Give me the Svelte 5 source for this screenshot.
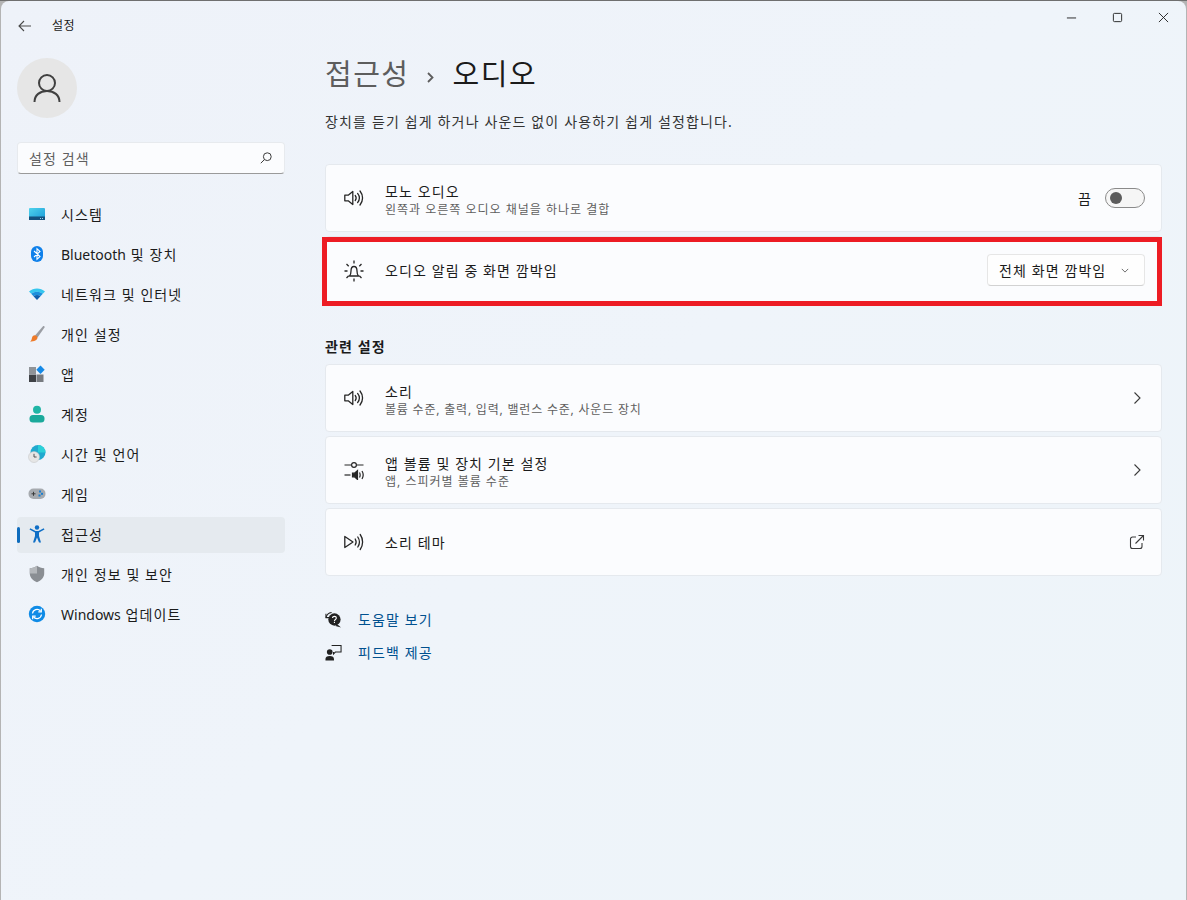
<script>
  const nav = [
    { id: 'system', label: '시스템' },
    { id: 'bluetooth', latin: 'Bluetooth', label: ' 및 장치' },
    { id: 'network', label: '네트워크 및 인터넷' },
    { id: 'personal', label: '개인 설정' },
    { id: 'apps', label: '앱' },
    { id: 'account', label: '계정' },
    { id: 'time', label: '시간 및 언어' },
    { id: 'game', label: '게임' },
    { id: 'access', label: '접근성', active: true },
    { id: 'privacy', label: '개인 정보 및 보안' },
    { id: 'update', latin: 'Windows', label: ' 업데이트' }
  ];
</script>

{#snippet speaker()}
  <svg class="row-icon" viewBox="0 0 20 20" fill="none" stroke="#262626" stroke-width="1.3">
    <path d="M0.800 7.200h3.400l4.600-3.800v13.200l-4.600-3.800H0.800z" stroke-linejoin="round" />
    <path d="M11.200 7.400c1.200 1.600 1.200 3.600 0 5.200" stroke-linecap="round" />
    <path d="M13.600 5.400c2.200 2.800 2.200 6.400 0 9.200" stroke-linecap="round" />
    <path d="M16 3c3.400 4.200 3.400 9.800 0 14" stroke-linecap="round" />
  </svg>
{/snippet}

<div class="window">
  <header class="titlebar">
    <div class="back-title">
      <svg class="back" viewBox="0 0 14 12" fill="none" stroke="#4a4a4a" stroke-width="1.100">
        <path d="M13 6H1M6 1L1 6l5 5" />
      </svg>
      <span class="app-name">설정</span>
    </div>
    <div class="controls">
      <span class="ctl"><svg viewBox="0 0 12 12" stroke="#1f1f1f" fill="none"><path d="M1 6.500h10" /></svg></span>
      <span class="ctl"><svg viewBox="0 0 12 12" stroke="#1f1f1f" fill="none"><rect x="1.500" y="1.500" width="9" height="9" rx="1.200" /></svg></span>
      <span class="ctl"><svg viewBox="0 0 12 12" stroke="#1f1f1f" fill="none"><path d="M1 1l10 10M11 1L1 11" /></svg></span>
    </div>
  </header>

  <div class="body">
    <aside class="sidebar">
      <div class="avatar">
        <svg viewBox="0 0 28 30" fill="none" stroke="#404040" stroke-width="2">
          <circle cx="14" cy="10" r="8" />
          <path d="M1.500 29c0-7 5.500-11 12.500-11s12.500 4 12.500 11" />
        </svg>
      </div>

      <div class="search">
        <span>설정 검색</span>
        <svg viewBox="0 0 12 12" fill="none" stroke="#3c3c3c" stroke-width="1">
          <circle cx="7.300" cy="4.700" r="3.900" />
          <path d="M4.500 7.500L0.800 11.200" />
        </svg>
      </div>

      <nav class="nav">
        {#each nav as item}
          <div class="nav-item" class:active={item.active}>
            <span class="nav-icon">
              {#if item.id === 'system'}
                <svg viewBox="0 0 18 14">
                  <defs><linearGradient id="sys" x1="0" y1="0" x2="1" y2="1"><stop offset="0" stop-color="#4fd3ec" /><stop offset="1" stop-color="#1a9ad8" /></linearGradient></defs>
                  <rect x="1" y="1" width="16" height="12" rx="1" fill="url(#sys)" />
                  <rect x="1" y="9.500" width="16" height="3.500" fill="#14527f" />
                  <rect x="12" y="11" width="1" height="1" fill="#9fd4ee" /><rect x="14" y="11" width="1" height="1" fill="#9fd4ee" />
                </svg>
              {:else if item.id === 'bluetooth'}
                <svg viewBox="0 0 18 18">
                  <rect x="3" y="1" width="12" height="16" rx="6" fill="#0f80ea" />
                  <path d="M6 6l6 5.500-3 2.800V3.700l3 2.800L6 12" fill="none" stroke="#fff" stroke-width="1.100" />
                </svg>
              {:else if item.id === 'network'}
                <svg viewBox="0 0 18 14">
                  <path d="M1 4.500C5.500 0.500 12.500 0.500 17 4.500L14.800 6.800C11.500 4 6.500 4 3.200 6.800z" fill="#35c6ee" />
                  <path d="M3.200 6.800C6.500 4 11.500 4 14.800 6.800L12.500 9.200C10.500 7.600 7.500 7.600 5.500 9.200z" fill="#1a8fdc" />
                  <path d="M5.500 9.200C7.500 7.600 10.500 7.600 12.500 9.200L9 13z" fill="#0f5fae" />
                </svg>
              {:else if item.id === 'personal'}
                <svg viewBox="0 0 18 18">
                  <path d="M7 10.500L15 1.200c.8-.6 2 .3 1.500 1.200L9.500 12.500z" fill="#9a9da3" />
                  <path d="M6.800 10.300c1.300 0 2.800 1 2.700 2.400-.2 2.300-3 3.800-7.500 3.800 1.800-1.200 1.500-2 2-3.800.3-1.500 1.300-2.400 2.800-2.400z" fill="#ee7b2a" />
                </svg>
              {:else if item.id === 'apps'}
                <svg viewBox="0 0 18 18">
                  <rect x="1" y="2" width="7" height="7" fill="#8f9398" />
                  <rect x="1" y="9.500" width="7" height="7.500" fill="#3f4246" />
                  <rect x="8.500" y="9.500" width="7" height="7.500" fill="#777b80" />
                  <path d="M12.500 0.500L16.700 4.700 12.500 8.900 8.300 4.700z" fill="#1589e6" />
                </svg>
              {:else if item.id === 'account'}
                <svg viewBox="0 0 18 18">
                  <circle cx="9" cy="4.800" r="4" fill="#1fb5a6" />
                  <rect x="1.500" y="10" width="15" height="7.500" rx="3.500" fill="#1aa99b" />
                </svg>
              {:else if item.id === 'time'}
                <svg viewBox="0 0 18 18">
                  <circle cx="10" cy="7.500" r="7.500" fill="#20a9cf" />
                  <path d="M10 0a7.500 7.500 0 0 1 7.500 7.500H10z" fill="#2bd0d8" />
                  <circle cx="6" cy="12" r="5.500" fill="#e6e6e6" stroke="#c2c2c2" stroke-width="0.500" />
                  <path d="M6 8.800V12h2.600" fill="none" stroke="#444" stroke-width="0.900" />
                </svg>
              {:else if item.id === 'game'}
                <svg viewBox="0 0 18 14">
                  <rect x="0.500" y="1.500" width="17" height="10.500" rx="5" fill="#a6aaaf" />
                  <path d="M3.500 6.800h4M5.500 4.800v4" stroke="#3a3a3a" stroke-width="1" />
                  <rect x="11" y="3.500" width="2" height="2" fill="#1a7fd0" /><rect x="13" y="5.800" width="2" height="2" fill="#1a7fd0" /><rect x="10.500" y="7.500" width="2" height="2" fill="#1a7fd0" />
                </svg>
              {:else if item.id === 'access'}
                <svg viewBox="0 0 18 18">
                  <circle cx="9" cy="2.500" r="2.200" fill="#0f6fc6" />
                  <path d="M1.500 4.500L7 7.500V11L5 17.500h2L9 12.500l2 5h2L11 11V7.500l5.500-3-.8-1.300L10.500 6h-3L2.300 3.200z" fill="#0f6fc6" />
                </svg>
              {:else if item.id === 'privacy'}
                <svg viewBox="0 0 18 18">
                  <path d="M9 0.800c2 1.600 4.500 2.400 7.200 2.500v5.200c0 4-3 7.200-7.200 8.700-4.200-1.500-7.200-4.700-7.200-8.700V3.300C4.500 3.200 7 2.400 9 .8z" fill="#8a8e93" />
                  <path d="M9 0.800c-2 1.600-4.500 2.400-7.200 2.500v5.200H9z" fill="#b4b7bb" />
                </svg>
              {:else if item.id === 'update'}
                <svg viewBox="0 0 18 18">
                  <circle cx="9" cy="9" r="8.200" fill="#0f8be6" />
                  <path d="M4.500 8.500a4.600 4.600 0 0 1 8-2.500M13.500 9.500a4.600 4.600 0 0 1-8 2.500" fill="none" stroke="#fff" stroke-width="1.200" />
                  <path d="M13.300 3.800v3h-3M4.700 14.200v-3h3" fill="none" stroke="#fff" stroke-width="1.200" />
                </svg>
              {/if}
            </span>
            <span class="nav-label">{#if item.latin}<span class="latin">{item.latin}</span>{/if}{item.label}</span>
          </div>
        {/each}
      </nav>
    </aside>

    <main class="main">
      <h1 class="crumb">
        <span class="parent">접근성</span>
        <svg class="sep" viewBox="0 0 7 11" fill="none" stroke="#5d5d5d" stroke-width="1.800"><path d="M1 1l4.500 4.500L1 10" /></svg>
        <span>오디오</span>
      </h1>
      <p class="desc">장치를 듣기 쉽게 하거나 사운드 없이 사용하기 쉽게 설정합니다.</p>

      <div class="cards">
        <div class="card">
          {@render speaker()}
          <div class="text">
            <div class="t">모노 오디오</div>
            <div class="s">왼쪽과 오른쪽 오디오 채널을 하나로 결합</div>
          </div>
          <span class="state">끔</span>
          <span class="toggle"><i></i></span>
        </div>

        <div class="card marked">
          <svg class="row-icon bell" viewBox="0 0 20 22" fill="none" stroke="#262626" stroke-width="1.300">
            <path d="M5.500 16c1-1 1.500-2.200 1.500-5 0-2.500 1-4.500 3-4.500s3 2 3 4.500c0 2.800.5 4 1.500 5z" stroke-linejoin="round" />
            <path d="M10 0.500v3M10 18.500v3M0.500 11h3M16.500 11h3M2.500 4l2.200 2.200M17.500 4l-2.200 2.200M2.500 18l2.200-2.200M17.500 18l-2.200-2.200" />
          </svg>
          <div class="text"><div class="t">오디오 알림 중 화면 깜박임</div></div>
          <span class="select">
            전체 화면 깜박임
            <svg viewBox="0 0 10 6" fill="none" stroke="#4a4a4a"><path d="M1 1l4 4 4-4" /></svg>
          </span>
        </div>
      </div>

      <h2 class="section">관련 설정</h2>

      <div class="cards">
        <div class="card">
          {@render speaker()}
          <div class="text">
            <div class="t">소리</div>
            <div class="s tight">볼륨 수준, 출력, 입력, 밸런스 수준, 사운드 장치</div>
          </div>
          <svg class="go" viewBox="0 0 16 16" fill="none" stroke="#3a3a3a" stroke-width="1.100"><path d="M5.500 2.500L11 8l-5.500 5.500" /></svg>
        </div>

        <div class="card">
          <svg class="row-icon" viewBox="0 0 20 20" fill="none" stroke="#262626" stroke-width="1.200">
            <path d="M0.500 5h7M12.500 5h7" />
            <circle cx="10" cy="5" r="2.400" />
            <path d="M0.500 15h6" />
            <path d="M8.500 13.200h2l3-2.700v9l-3-2.700h-2z" fill="#262626" />
            <path d="M15.500 12.500c.8 1.500.8 3.500 0 5M18 11c1.500 2.500 1.500 5.500 0 8" />
          </svg>
          <div class="text">
            <div class="t">앱 볼륨 및 장치 기본 설정</div>
            <div class="s">앱, 스피커별 볼륨 수준</div>
          </div>
          <svg class="go" viewBox="0 0 16 16" fill="none" stroke="#3a3a3a" stroke-width="1.100"><path d="M5.500 2.500L11 8l-5.500 5.500" /></svg>
        </div>

        <div class="card">
          <svg class="row-icon" viewBox="0 0 20 20" fill="none" stroke="#262626" stroke-width="1.300">
            <path d="M0.800 4.500L9 10 0.800 15.500z" stroke-linejoin="round" />
            <path d="M11.200 7c1.200 1.900 1.200 4.100 0 6M13.800 5c2 3 2 7 0 10M16.200 2.500c3.200 4.500 3.200 10.500 0 15" stroke-linecap="round" />
          </svg>
          <div class="text"><div class="t">소리 테마</div></div>
          <svg class="go" viewBox="0 0 16 16" fill="none" stroke="#3a3a3a" stroke-width="1.100">
            <path d="M7 3H3.500A2 2 0 0 0 1.500 5v7.500a2 2 0 0 0 2 2H11a2 2 0 0 0 2-2V9" />
            <path d="M6.500 9.500L14 2M9.500 1.500H14.500V6.500" />
          </svg>
        </div>
      </div>

      <div class="links">
        <div class="link">
          <svg viewBox="0 0 18 18">
            <path d="M1 7a7 7 0 0 1 6-5.500" fill="none" stroke="#222" stroke-width="1.100" />
            <path d="M1 3v4h4" fill="none" stroke="#222" stroke-width="1.100" />
            <circle cx="10" cy="9" r="6.500" fill="#222" />
            <path d="M13 14l4 3.500-6-1.500z" fill="#222" />
            <path d="M8 7.500c0-2.500 4-2.500 4 0 0 1.500-2 1.500-2 3M10 11.500v1.200" fill="none" stroke="#fff" stroke-width="1.200" />
          </svg>
          <span>도움말 보기</span>
        </div>
        <div class="link">
          <svg viewBox="0 0 18 18">
            <circle cx="5" cy="8.500" r="3" fill="#222" />
            <path d="M0.500 17.500v-1.500c0-2 1.500-3.200 4.500-3.200s4.500 1.200 4.500 3.200v1.500z" fill="#222" />
            <path d="M7 1.500h10v7H11l-2 2v-2" fill="none" stroke="#222" stroke-width="1.100" />
          </svg>
          <span>피드백 제공</span>
        </div>
      </div>
    </main>
  </div>
</div>

<style>
  :global(body) {
    margin: 0;
    background: linear-gradient(#6f6f6f 1px, #b4b4b4 1px);
  }
  .window {
    margin: 1px 1px 0 1px;
    height: 899px;
    border-radius: 8px 8px 0 0;
    background: linear-gradient(135deg, #eef2f9 0%, #eff4fa 50%, #edf4f9 100%);
    color: #1b1b1b;
    font-family: "Noto Sans", "Noto Sans CJK KR", sans-serif;
    font-size: 14px;
    letter-spacing: 1.1px;
    overflow: hidden;
  }
  .latin { letter-spacing: 0; }
  .titlebar {
    height: 50px;
    display: flex;
    justify-content: space-between;
  }
  .back-title {
    display: flex;
    align-items: center;
    padding-left: 17px;
  }
  .back { width: 14px; height: 12px; margin-right: 20px; }
  .app-name { font-size: 12px; letter-spacing: 0.5px; padding-bottom: 2px; }
  .controls { display: flex; align-self: flex-start; }
  .ctl {
    width: 46px;
    height: 32px;
    display: flex;
    align-items: center;
    justify-content: center;
  }
  .ctl svg { width: 11px; height: 11px; }

  .body { display: flex; }
  .sidebar {
    box-sizing: border-box;
    width: 300px;
    flex: none;
    padding: 7px 16px 0 16px;
  }
  .avatar {
    width: 60px;
    height: 60px;
    border-radius: 50%;
    background: #e6e6e6;
    display: flex;
    align-items: center;
    justify-content: center;
  }
  .avatar svg { width: 28px; height: 30px; }
  .search {
    box-sizing: border-box;
    height: 32px;
    margin-top: 24px;
    padding: 0 12px 0 11px;
    display: flex;
    align-items: center;
    justify-content: space-between;
    background: #fbfcfe;
    border: 1px solid #e7eaee;
    border-bottom-color: #9a9a9a;
    border-radius: 4px;
    color: #5f5f5f;
  }
  .search svg { width: 12px; height: 12px; }
  .nav {
    margin-top: 23px;
    display: flex;
    flex-direction: column;
    gap: 4px;
  }
  .nav-item {
    position: relative;
    height: 36px;
    display: flex;
    align-items: center;
    padding-left: 11px;
    gap: 15px;
    border-radius: 4px;
  }
  .nav-label { padding-bottom: 2px; }
  .nav-item.active { background: #e5eaef; }
  .nav-item.active::before {
    content: "";
    position: absolute;
    left: 0;
    top: 10px;
    bottom: 10px;
    width: 3px;
    border-radius: 2px;
    background: #0f6cbd;
  }
  .nav-icon {
    width: 18px;
    height: 18px;
    margin-bottom: 2px;
    display: flex;
    align-items: center;
  }
  .nav-icon svg { width: 18px; height: 18px; }

  .main {
    flex: 1;
    padding: 3px 24px 0 24px;
    min-width: 0;
  }
  .crumb {
    margin: 0;
    height: 40px;
    display: flex;
    align-items: center;
    font-size: 29px;
    font-weight: 400;
    line-height: 40px;
    letter-spacing: 1.5px;
  }
  .parent { color: #5d5d5d; }
  .sep { width: 7px; height: 11px; margin: 6px 19px 0 17px; flex: none; }
  .desc {
    margin: 18px 0 0;
    line-height: 20px;
    letter-spacing: 1.15px;
    color: #333;
  }
  .cards {
    margin-top: 32px;
    display: flex;
    flex-direction: column;
    gap: 4px;
  }
  .card {
    position: relative;
    box-sizing: border-box;
    height: 68px;
    padding: 0 16px 0 18px;
    display: flex;
    align-items: center;
    background: #fbfcfe;
    border: 1px solid #e5e9ee;
    border-radius: 4px;
  }
  .marked::after {
    content: "";
    position: absolute;
    left: -4px;
    right: -1px;
    top: 0;
    bottom: -3px;
    border: 5px solid #ed1c24;
    pointer-events: none;
  }
  .row-icon { width: 20px; height: 20px; flex: none; margin-right: 21px; }
  .bell { height: 22px; margin-top: 2px; }
  .text { flex: 1; min-width: 0; padding-top: 2px; }
  .t { line-height: 20px; }
  .t:not(:only-child) { padding-top: 2px; }
  .s { font-size: 12px; line-height: 16px; color: #5f5f5f; letter-spacing: 1px; }
  .s.tight { letter-spacing: 0.8px; }
  .state { margin-right: 13px; }
  .toggle {
    box-sizing: border-box;
    width: 40px;
    height: 20px;
    padding: 0 4px;
    display: flex;
    align-items: center;
    background: #f6f6f6;
    border: 1px solid #8a8a8a;
    border-radius: 10px;
  }
  .toggle i {
    width: 12px;
    height: 12px;
    border-radius: 50%;
    background: #5c5c5c;
  }
  .select {
    box-sizing: border-box;
    width: 158px;
    height: 32px;
    padding: 0 15px 0 11px;
    display: flex;
    align-items: center;
    justify-content: space-between;
    background: #fefefe;
    border: 1px solid #e6e6e6;
    border-bottom-color: #d2d2d2;
    border-radius: 4px;
  }
  .select svg { width: 8px; height: 5px; }
  .go { width: 16px; height: 16px; flex: none; }
  .section {
    margin: 33px 0 -25px;
    font-size: 14px;
    font-weight: 600;
    line-height: 20px;
  }
  .links {
    margin-top: 27px;
    display: flex;
    flex-direction: column;
  }
  .link {
    height: 33px;
    display: flex;
    align-items: center;
    gap: 16px;
    color: #00508f;
  }
  .link span { padding-bottom: 2px; }
  .link svg { width: 17px; height: 17px; flex: none; }
</style>
